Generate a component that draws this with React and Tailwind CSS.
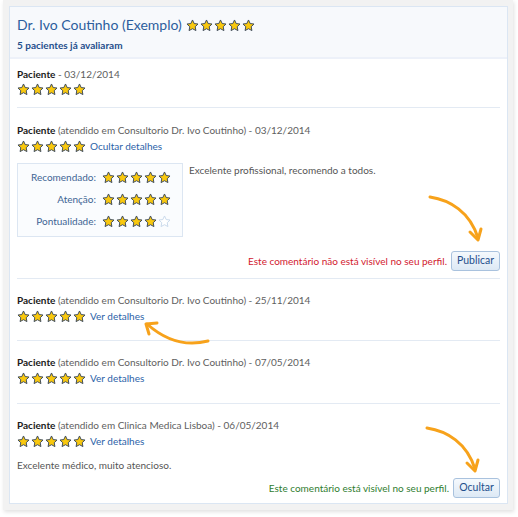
import React from "react";

const Star = ({ empty = false, size = 13 }) => (
  <svg width={size} height={size} viewBox="0 0 24 24" className="block">
    <path
      d="M12 1.8l3.1 6.6 7.1.9-5.2 5 1.3 7.1L12 17.9l-6.3 3.5 1.3-7.1-5.2-5 7.1-.9z"
      fill={empty ? "#ffffff" : "#f9c80e"}
      stroke={empty ? "#c9d9ea" : "#3d4a5c"}
      strokeWidth="1.8"
      strokeLinejoin="round"
    />
  </svg>
);

const Stars = ({ n = 5, size = 13 }) => (
  <div className="flex gap-[1px]">
    {[0, 1, 2, 3, 4].map((i) => (
      <Star key={i} empty={i >= n} size={size} />
    ))}
  </div>
);

const Header = ({ where, date }) => (
  <div className="text-[10px] leading-[14px] text-[#1a1a1a]">
    <span className="font-bold">Paciente</span>
    <span className="text-[#5e5e5e]">
      {where ? ` (atendido em ${where})` : ""} - {date}
    </span>
  </div>
);

const Link = ({ children }) => (
  <span className="text-[10px] leading-[14px] text-[#2b62a8] ml-[4px]">{children}</span>
);

const Arrow = ({ className, d, head }) => (
  <svg className={className} width="70" height="60" viewBox="0 0 70 60" fill="none">
    <path d={d} stroke="#f7a21b" strokeWidth="3" strokeLinecap="round" fill="none" />
    <path d={head} stroke="#f7a21b" strokeWidth="3" strokeLinecap="round" strokeLinejoin="round" fill="none" />
  </svg>
);

export default function App() {
  return (
    <div className="w-[518px] h-[517px] bg-white relative" style={{ fontFamily: "Lato, 'Noto Sans', sans-serif" }}>
      <div className="ml-[3px] w-[510px] h-[510px] bg-[#f2f2f2] pt-[6px] pl-[6px] shadow-[1px_2px_4px_rgba(0,0,0,0.12)]">
        <div className="w-[499px] h-[498px] border border-[#dbe6f3] bg-white flex flex-col overflow-hidden">
          <div className="bg-[#f7f9fc] border-b-2 border-[#edf1f9] px-[7px] pt-[8px] h-[52px] shrink-0">
            <div className="flex items-center gap-[4px]">
              <span className="text-[14px] leading-[20px] text-[#2c5d9c]">Dr. Ivo Coutinho (Exemplo)</span>
              <Stars size={13} />
            </div>
            <div className="text-[10px] leading-[14px] font-bold text-[#1f4f8c] mt-[3px]">5 pacientes já avaliaram</div>
          </div>

          <div className="px-[7px] flex flex-col">
            {/* Review 1 */}
            <div className="pt-[8px] pb-[11px] border-b border-[#e3eaf3] flex flex-col gap-[2px]">
              <Header date="03/12/2014" />
              <Stars />
            </div>

            {/* Review 2 */}
            <div className="pt-[15px] pb-[7px] border-b border-[#e3eaf3] flex flex-col">
              <Header where="Consultorio Dr. Ivo Coutinho" date="03/12/2014" />
              <div className="flex items-center mt-[2px]">
                <Stars />
                <Link>Ocultar detalhes</Link>
              </div>
              <div className="flex mt-[10px] gap-[6px]">
                <div className="w-[166px] h-[74px] border border-[#dce6f2] bg-[#fafcfe] grid grid-cols-[78px_auto] content-start items-center gap-x-[6px] gap-y-[8px] pt-[6px]">
                  <span className="text-[10px] leading-[14px] text-[#3e6594] text-right">Recomendado:</span>
                  <Stars />
                  <span className="text-[10px] leading-[14px] text-[#3e6594] text-right">Atenção:</span>
                  <Stars />
                  <span className="text-[10px] leading-[14px] text-[#3e6594] text-right">Pontualidade:</span>
                  <Stars n={4} />
                </div>
                <div className="text-[10px] leading-[14px] text-[#555]">Excelente profissional, recomendo a todos.</div>
              </div>
              <div className="flex justify-end items-center gap-[4px] mt-[14px]">
                <span className="text-[10px] text-[#d2202f]">Este comentário não está visível no seu perfil.</span>
                <button className="h-[20px] w-[49px] rounded-[3px] border border-[#a9c2de] bg-gradient-to-b from-[#f5f9fd] to-[#dde9f5] text-[10.5px] text-[#1f4f8c]">Publicar</button>
              </div>
            </div>

            {/* Review 3 */}
            <div className="pt-[14px] pb-[17px] border-b border-[#e3eaf3] flex flex-col">
              <Header where="Consultorio Dr. Ivo Coutinho" date="25/11/2014" />
              <div className="flex items-center mt-[2px]">
                <Stars />
                <Link>Ver detalhes</Link>
              </div>
            </div>

            {/* Review 4 */}
            <div className="pt-[14px] pb-[18px] border-b border-[#e3eaf3] flex flex-col">
              <Header where="Consultorio Dr. Ivo Coutinho" date="07/05/2014" />
              <div className="flex items-center mt-[2px]">
                <Stars />
                <Link>Ver detalhes</Link>
              </div>
            </div>

            {/* Review 5 */}
            <div className="pt-[14px] flex flex-col">
              <Header where="Clinica Medica Lisboa" date="06/05/2014" />
              <div className="flex items-center mt-[2px]">
                <Stars />
                <Link>Ver detalhes</Link>
              </div>
              <div className="text-[10px] leading-[14px] text-[#555] mt-[10px]">Excelente médico, muito atencioso.</div>
              <div className="flex justify-end items-center gap-[4px] mt-[6px]">
                <span className="text-[10px] text-[#2f7d2f]">Este comentário está visível no seu perfil.</span>
                <button className="h-[20px] w-[47px] rounded-[3px] border border-[#a9c2de] bg-gradient-to-b from-[#f5f9fd] to-[#dde9f5] text-[10.5px] text-[#1f4f8c]">Ocultar</button>
              </div>
            </div>
          </div>
        </div>
      </div>

      <Arrow className="absolute left-[425px] top-[190px]" d="M5 7 C25 10 45 22 53 48" head="M45 42 L53 50 L56 39" />
      <Arrow className="absolute left-[140px] top-[293px]" d="M68 48 C45 54 25 47 7 31" head="M9 41 L6 31 L17 30" />
      <Arrow className="absolute left-[422px] top-[421px]" d="M5 7 C25 10 45 22 53 48" head="M45 42 L53 50 L56 39" />
    </div>
  );
}
